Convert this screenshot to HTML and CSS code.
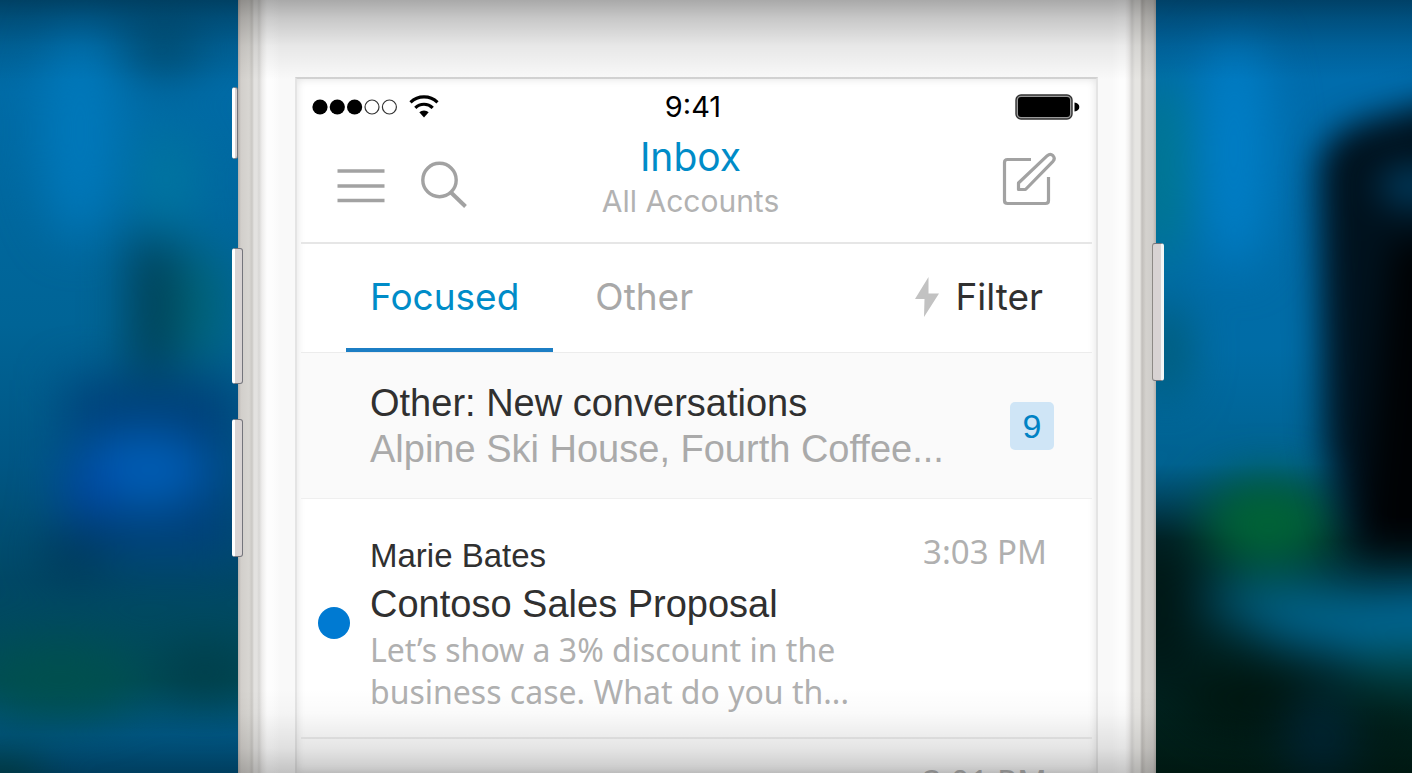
FILE: index.html
```html
<!DOCTYPE html>
<html lang="en">
<head>
<meta charset="utf-8">
<meta name="viewport" content="width=device-width, initial-scale=1">
<title>Inbox</title>
<link rel="stylesheet" href="styles.css">
</head>
<body>
<svg class="backdrop" viewBox="0 0 1412 773" preserveAspectRatio="none" aria-hidden="true">
  <defs>
    <filter id="soft" x="-50%" y="-50%" width="200%" height="200%" color-interpolation-filters="sRGB"><feGaussianBlur stdDeviation="24"/></filter>
    <filter id="tight" x="-100%" y="-50%" width="300%" height="200%" color-interpolation-filters="sRGB"><feGaussianBlur stdDeviation="17"/></filter>
    <linearGradient id="left" x1="0" y1="0" x2="0" y2="1">
      <stop offset="0" stop-color="#006094"/><stop offset=".12" stop-color="#006ba6"/><stop offset=".42" stop-color="#006496"/><stop offset=".6" stop-color="#005684"/><stop offset=".75" stop-color="#004866"/><stop offset=".88" stop-color="#004c58"/><stop offset=".95" stop-color="#005a88"/><stop offset="1" stop-color="#00507a"/>
    </linearGradient>
    <linearGradient id="right" x1="0" y1="0" x2="0" y2="1">
      <stop offset="0" stop-color="#006098"/><stop offset=".1" stop-color="#006cac"/><stop offset=".45" stop-color="#006ca6"/><stop offset=".6" stop-color="#006290"/><stop offset=".7" stop-color="#002830"/><stop offset="1" stop-color="#002018"/>
    </linearGradient>
  </defs>
  <rect width="700" height="773" fill="url(#left)"/>
  <rect x="700" width="712" height="773" fill="url(#right)"/>
  <g filter="url(#soft)">
    <ellipse cx="80" cy="130" rx="40" ry="110" fill="#0078ba"/>
    <ellipse cx="165" cy="50" rx="38" ry="24" fill="#004c70"/>
    <ellipse cx="168" cy="180" rx="28" ry="50" fill="#0076a0"/>
    <rect x="132" y="240" width="42" height="130" fill="#003c4c"/>
    <ellipse cx="202" cy="305" rx="22" ry="60" fill="#006474"/>
    <rect x="66" y="380" width="170" height="180" fill="#004078"/>
    <ellipse cx="142" cy="470" rx="70" ry="40" fill="#005cb4"/>
    <ellipse cx="84" cy="490" rx="24" ry="30" fill="#0044a0"/>
    <ellipse cx="74" cy="556" rx="34" ry="18" fill="#003454"/>
    <ellipse cx="60" cy="680" rx="80" ry="36" fill="#00504e"/>
    <ellipse cx="205" cy="672" rx="50" ry="24" fill="#003c48"/>
    <ellipse cx="0" cy="780" rx="44" ry="22" fill="#004440"/>
    <ellipse cx="1235" cy="150" rx="36" ry="120" fill="#007ec6"/>
    <ellipse cx="1162" cy="170" rx="18" ry="100" fill="#007c84"/>
    <ellipse cx="1166" cy="350" rx="18" ry="50" fill="#005668"/>
    <ellipse cx="1156" cy="610" rx="46" ry="76" fill="#001816"/>
    <ellipse cx="1268" cy="522" rx="66" ry="44" fill="#006436"/>
    <ellipse cx="1440" cy="622" rx="190" ry="34" fill="#006a9c"/>
    <ellipse cx="1290" cy="600" rx="90" ry="22" fill="#006080"/>
    <ellipse cx="1250" cy="700" rx="70" ry="34" fill="#001610"/>
    <ellipse cx="1320" cy="740" rx="34" ry="50" fill="#002636"/>
    <ellipse cx="1410" cy="665" rx="60" ry="22" fill="#00484c"/>
    <ellipse cx="1380" cy="735" rx="26" ry="34" fill="#001c16"/>
  </g>
  <g filter="url(#tight)">
    <path d="M1318 168Q1322 136 1360 122L1500 84V554H1360Q1338 520 1324 440Z" fill="#00121e"/>
    <path d="M1392 240H1500V548H1362Q1375 400 1392 240Z" fill="#000204"/>
    <ellipse cx="1412" cy="186" rx="34" ry="20" fill="#003a5c"/>
  </g>
</svg>

<div class="stage">
  <div class="phone">
    <span class="key key-mute"></span>
    <span class="key key-up"></span>
    <span class="key key-down"></span>
    <span class="key key-power"></span>

    <main class="screen">
      <div class="status">
        <svg class="signal" width="128" height="24" viewBox="0 0 128 24" role="img" aria-label="Signal and Wi-Fi">
          <circle cx="8" cy="12" r="7.6"/><circle cx="25.300" cy="12" r="7.600"/><circle cx="42.600" cy="12" r="7.600"/>
          <g fill="none" stroke="#333" stroke-width="1.200"><circle cx="60" cy="12" r="7"/><circle cx="77.400" cy="12" r="7"/></g>
          <g fill="none" stroke="#000" stroke-width="3.200"><path d="M98.500 7.300a19.500 19.500 0 0 1 27 0"/><path d="M103.300 12.800a12.400 12.400 0 0 1 17.400 0"/></g>
          <path d="M107.300 17.300a6.800 6.800 0 0 1 9.400 0L112 22.600z"/>
        </svg>
        <time class="clock">9:41</time>
        <svg class="battery" width="65" height="26" viewBox="0 0 65 26" role="img" aria-label="Battery full">
          <rect x="1" y="1" width="56" height="24" rx="5" fill="#999" stroke="#333" stroke-width="1.400"/>
          <rect x="3" y="3" width="52" height="20" rx="3"/>
          <path d="M59.500 8.500c3 .5 4.800 2 4.800 4.500s-1.800 4-4.800 4.500z"/>
        </svg>
      </div>

      <header class="nav">
        <div class="nav-left">
          <button class="icon-button" type="button" aria-label="Menu">
            <svg width="48" height="48" viewBox="0 0 48 48" fill="none" stroke="#a2a2a2" stroke-width="3.400"><path d="M0.500 10H47.500M0.500 25H47.500M0.500 39.500H47.500"/></svg>
          </button>
          <button class="icon-button" type="button" aria-label="Search">
            <svg width="48" height="48" viewBox="0 0 48 48" fill="none" stroke="#a2a2a2" stroke-width="3.400"><circle cx="18.500" cy="19" r="16.700"/><path d="M30 31.500L44.500 45.500" stroke-width="4"/></svg>
          </button>
        </div>
        <div class="heading">
          <h1 class="title">Inbox</h1>
          <p class="subtitle">All Accounts</p>
        </div>
        <button class="icon-button compose" type="button" aria-label="New message">
          <svg width="56" height="56" viewBox="0 0 56 56" fill="none" stroke="#a2a2a2" stroke-width="3.200" stroke-linejoin="round"><path d="M31 8.500H7.500Q4.500 8.500 4.500 11.500V49.500Q4.500 52.500 7.500 52.500H45.500Q48.500 52.500 48.500 49.500V26"/><path d="M18.500 38.500V32L47.300 4.700Q50.300 2.200 53 4.700Q55.500 7.500 53 10.300L25.500 38.500Z"/></svg>
        </button>
      </header>

      <nav class="tabs" aria-label="Mailbox view">
        <button class="tab tab-active" type="button" aria-pressed="true">Focused</button>
        <button class="tab" type="button" aria-pressed="false">Other</button>
        <button class="filter" type="button">
          <svg width="24" height="40" viewBox="0 0 24 40" aria-hidden="true"><path d="M13.500 0L0 22H9.500L9 40L24 16.500H13.500Z" fill="#c2c2c2"/></svg>
          Filter
        </button>
      </nav>

      <section class="digest">
        <div class="body">
          <h2 class="subject">Other: New conversations</h2>
          <p class="senders">Alpine Ski House, Fourth Coffee...</p>
        </div>
        <span class="badge">9</span>
      </section>

      <article class="message">
        <span class="unread" role="img" aria-label="Unread"></span>
        <div class="body">
          <p class="sender">Marie Bates</p>
          <h2 class="subject">Contoso Sales Proposal</h2>
          <p class="preview">Let’s show a 3% discount in the<br>business case. What do you th...</p>
        </div>
        <time class="time">3:03 PM</time>
      </article>

      <article class="message message-next">
        <span></span>
        <div class="body"></div>
        <time class="time">3:01 PM</time>
      </article>
    </main>
  </div>
</div>
<div class="shade"></div>
</body>
</html>
```

FILE: styles.css
```css
* { box-sizing: border-box; }

body {
  margin: 0;
  height: 100vh;
  overflow: hidden;
  background: #00507a;
  color: #303030;
  font-family: Inter, "Liberation Sans", sans-serif;
}

h1, h2, p { margin: 0; font-weight: 400; }

button {
  margin: 0;
  padding: 0;
  border: 0;
  background: none;
  color: inherit;
  font: inherit;
  cursor: pointer;
}

svg { display: block; }

.backdrop {
  position: absolute;
  inset: 0;
  width: 100%;
  height: 100%;
}

.stage {
  display: grid;
  grid-template-columns: 238fr 918fr 256fr;
  height: 100%;
}

.phone {
  position: relative;
  grid-column: 2;
  display: flex;
  flex-direction: column;
  height: 100vh;
  padding: 77px 58px 0 57px;
  background:
    linear-gradient(to right, #b4b0ac 0, #d2cfcb 3px, #d8d6d2 11px, #cac8c4 14px, #e3e2e0 16px, #e3e2e0 19px, #d8d7d5 21px, #eeedec 24px, #fdfdfd 29px, #fdfdfd 34px, rgba(255, 255, 255, 0) 42px),
    linear-gradient(to left, #b4b0ac 0, #cfcdca 3px, #d4d2ce 10px, #c2bfbb 14px, #e6e5e2 16px, #e6e5e2 21px, #d8d7d5 24px, #f0efee 27px, #fdfdfd 31px, #fdfdfd 36px, rgba(255, 255, 255, 0) 44px),
    #f9f9f9;
}

/* Hardware keys stick out of the phone's edge. */
.key {
  position: absolute;
  left: -6px;
  width: 8px;
  border: 1px solid #74757c;
  border-left: 3px solid #fff;
  border-radius: 3px;
  background: #d8d3d3;
}

.key-mute { top: 87px; width: 6px; height: 72px; }
.key-up { top: 248px; width: 11px; height: 136px; }
.key-down { top: 419px; width: 11px; height: 138px; }

.key-power {
  top: 243px;
  left: auto;
  right: -8px;
  width: 12px;
  height: 138px;
  border-right: 3px solid #f2f6f6;
  border-left: 1px solid #8d8a86;
}

.screen {
  flex: 1;
  min-height: 0;
  overflow: hidden;
  border: 2px solid #e4e4e4;
  border-top-color: #d2d2d2;
  border-bottom: 0;
  background: #fff;
  box-shadow: inset 0 0 8px rgba(0, 0, 0, .12);
}

.status {
  display: grid;
  grid-template-columns: 128px 1fr 134px;
  align-items: center;
  height: 56px;
  padding: 0 16px 0 15px;
}

.clock {
  justify-self: center;
  color: #000;
  font-size: 29px;
  line-height: 32px;
}

.battery { justify-self: end; }

.nav {
  display: grid;
  grid-template-columns: 132px 1fr 144px;
  height: 109px;
  margin: 0 4px;
  padding: 0 36px;
  border-bottom: 2px solid #e6e6e6;
}

.nav-left {
  display: flex;
  gap: 36px;
  padding-top: 26px;
}

.icon-button { align-self: start; }

.compose { justify-self: end; padding-top: 16px; }

.heading { text-align: center; }

.title {
  color: #008cc8;
  font-size: 39px;
  line-height: 44px;
}

.subtitle {
  color: #b2b2b2;
  font-size: 30px;
  line-height: 44px;
}

.tabs {
  display: flex;
  height: 109px;
  margin: 0 4px;
  padding: 0 49px 0 45px;
  border-bottom: 1px solid #ececec;
  font-size: 37px;
  line-height: 44px;
}

.tab {
  padding: 2px 34px 0 24px;
  border-bottom: 4px solid transparent;
  color: #a8a8a8;
}

.tab + .tab { margin-left: 18px; }

.tab-active {
  border-bottom-color: #1c7ec4;
  color: #008cc8;
}

.filter {
  display: flex;
  align-items: center;
  gap: 16px;
  margin-left: auto;
  padding-bottom: 2px;
  color: #303030;
}

.digest, .message {
  display: grid;
  grid-template-columns: 69px 1fr auto;
  margin: 0 4px;
  font-family: "Liberation Sans", Arial, sans-serif;
}

.digest {
  align-items: center;
  height: 146px;
  padding-right: 38px;
  border-bottom: 1px solid #efefef;
  background: #fafafa;
}

.body { grid-column: 2; }

.subject, .senders {
  font-size: 38px;
  line-height: 46px;
  white-space: nowrap;
}

.senders { color: #aaa; }

.badge {
  width: 44px;
  border-radius: 5px;
  background: #cfe5f6;
  color: #0082c4;
  font-size: 34px;
  line-height: 48px;
  text-align: center;
}

.message {
  padding: 34px 45px 24px 0;
  border-bottom: 2px solid #ededed;
}

.message .subject { line-height: 50px; }

.message-next {
  padding-top: 24px;
  border-bottom: 0;
}

.unread {
  align-self: center;
  justify-self: center;
  width: 32px;
  height: 32px;
  margin-right: 4px;
  border-radius: 50%;
  background: #007ad2;
}

.sender {
  font-size: 33px;
  line-height: 46px;
}

.preview, .time {
  color: #b0b0b0;
  font-family: "Noto Sans", sans-serif;
  font-size: 32px;
  line-height: 42px;
}

.time {
  font-size: 33px;
  line-height: 38px;
}

.preview { white-space: nowrap; }

/* Darkens the top and bottom edges of the whole scene. */
.shade {
  position: absolute;
  inset: 0;
  background:
    linear-gradient(to bottom, rgba(0, 0, 0, .32) 0, rgba(0, 0, 0, .2) 18px, rgba(0, 0, 0, .07) 46px, transparent 80px),
    linear-gradient(to top, rgba(0, 0, 0, .22) 0, rgba(0, 0, 0, .1) 25px, rgba(0, 0, 0, .02) 60px, transparent 84px);
  pointer-events: none;
}
```
